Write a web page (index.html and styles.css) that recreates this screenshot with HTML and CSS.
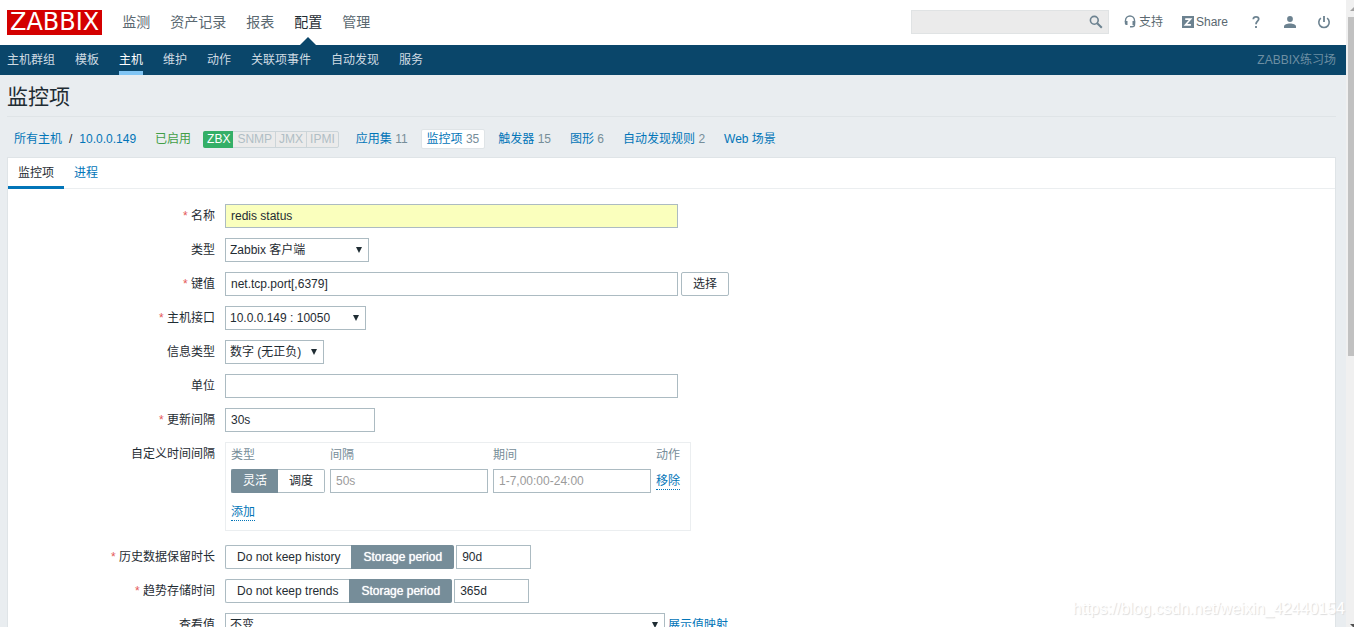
FILE: index.html
```html
<!DOCTYPE html>
<html lang="zh-CN">
<head>
<meta charset="utf-8">
<title>监控项</title>
<link rel="stylesheet" href="styles.css">
</head>
<body>
<div class="page">
  <header class="header">
    <a class="logo" href="#">ZABBIX</a>
    <nav class="main-nav">
      <a href="#">监测</a>
      <a href="#">资产记录</a>
      <a href="#">报表</a>
      <a href="#" class="active">配置</a>
      <a href="#">管理</a>
    </nav>
    <div class="search">
      <input type="search" class="search-input" aria-label="搜索">
      <button class="search-button" aria-label="搜索">
        <svg width="14" height="14" viewBox="0 0 14 14" fill="none" stroke="#6c8290"><circle cx="5.3" cy="5.3" r="3.9" stroke-width="1.6"/><path d="M8.2 8.2l4.6 4.6" stroke-width="2"/></svg>
      </button>
    </div>
    <a class="tool support" href="#">
      <svg width="12" height="13" viewBox="0 0 12 13" fill="#6c8290"><path d="M1.500 7V5.500a4.500 4.500 0 0 1 9 0V10c0 1.200-.8 1.700-2.500 1.700" fill="none" stroke="#6c8290" stroke-width="1.400"/><path d="M.8 6h2.700v4H2.300C1.400 10 .8 9 .8 8zM8.500 6h2.700v2c0 1-.6 2-1.500 2H8.500zM6 11h2v1.500H6z"/></svg>
      <span>支持</span>
    </a>
    <a class="tool share" href="#">
      <svg width="12" height="12" viewBox="0 0 12 12"><path fill="#6c8290" d="M0 0h12v12H0z"/><path d="M3.200 3.200h5.300L3.500 8.800h5.400" fill="none" stroke="#fff" stroke-width="1.700"/></svg>
      <span>Share</span>
    </a>
    <a class="tool icon" href="#" aria-label="帮助">
      <svg width="14" height="14" viewBox="0 0 14 14" fill="none" stroke="#6c8290" stroke-width="1.800"><path d="M4.300 4.200C4.400 2.600 5.400 1.900 7 1.900s2.700.8 2.700 2.200C9.700 6.200 7 6.300 7 9.200"/><path d="M7 10.900v2"/></svg>
    </a>
    <a class="tool icon" href="#" aria-label="用户">
      <svg width="14" height="14" viewBox="0 0 14 14" fill="#6c8290"><circle cx="7" cy="4" r="2.900"/><path d="M1 13v-1.600C1 9.500 4 8.500 7 8.500s6 1 6 2.900V13z"/></svg>
    </a>
    <a class="tool icon" href="#" aria-label="退出">
      <svg width="14" height="14" viewBox="0 0 14 14" fill="none" stroke="#6c8290" stroke-width="1.600"><path d="M3.900 3.200a5.200 5.200 0 1 0 6.200 0"/><path d="M7 1v6" stroke-width="1.800"/></svg>
    </a>
  </header>

  <nav class="sub-nav">
    <a href="#">主机群组</a>
    <a href="#">模板</a>
    <a href="#" class="active">主机</a>
    <a href="#">维护</a>
    <a href="#">动作</a>
    <a href="#">关联项事件</a>
    <a href="#">自动发现</a>
    <a href="#">服务</a>
    <span class="server-name">ZABBIX练习场</span>
  </nav>

  <main class="content">
    <h1 class="title">监控项</h1>

    <div class="object-bar">
      <div class="path"><a href="#">所有主机</a><span>/</span><a href="#">10.0.0.149</a></div>
      <span class="enabled">已启用</span>
      <div class="status"><span class="on">ZBX</span><span>SNMP</span><span>JMX</span><span>IPMI</span></div>
      <div class="objects">
        <div class="object"><a href="#">应用集</a> 11</div>
        <div class="object current"><a href="#">监控项</a> 35</div>
        <div class="object"><a href="#">触发器</a> 15</div>
        <div class="object"><a href="#">图形</a> 6</div>
        <div class="object"><a href="#">自动发现规则</a> 2</div>
        <div class="object"><a href="#">Web 场景</a></div>
      </div>
    </div>

    <section class="panel">
      <div class="tabs">
        <a href="#" class="tab active">监控项</a>
        <a href="#" class="tab">进程</a>
      </div>

      <form class="form">
        <label class="label required" for="name">名称</label>
        <div class="field"><input class="text wide focused" id="name" value="redis status"></div>

        <label class="label" for="type">类型</label>
        <div class="field"><span class="select select-type"><select id="type"><option>Zabbix 客户端</option></select></span></div>

        <label class="label required" for="key">键值</label>
        <div class="field"><input class="text wide" id="key" value="net.tcp.port[,6379]"><button type="button" class="button">选择</button></div>

        <label class="label required" for="iface">主机接口</label>
        <div class="field"><span class="select select-iface"><select id="iface"><option>10.0.0.149 : 10050</option></select></span></div>

        <label class="label" for="info">信息类型</label>
        <div class="field"><span class="select select-info"><select id="info"><option>数字 (无正负)</option></select></span></div>

        <label class="label" for="units">单位</label>
        <div class="field"><input class="text wide" id="units"></div>

        <label class="label required" for="delay">更新间隔</label>
        <div class="field"><input class="text medium" id="delay" value="30s"></div>

        <span class="label">自定义时间间隔</span>
        <div class="field">
          <div class="intervals">
            <table class="interval-table">
              <thead><tr><th>类型</th><th>间隔</th><th>期间</th><th>动作</th></tr></thead>
              <tbody><tr>
                <td>
                  <div class="segment">
                    <input type="radio" name="itype" id="flex" checked><label for="flex">灵活</label>
                    <input type="radio" name="itype" id="sched"><label for="sched">调度</label>
                  </div>
                </td>
                <td><input class="text cell" placeholder="50s" aria-label="间隔"></td>
                <td><input class="text cell" placeholder="1-7,00:00-24:00" aria-label="期间"></td>
                <td><a href="#" class="dotted">移除</a></td>
              </tr></tbody>
            </table>
            <a href="#" class="dotted">添加</a>
          </div>
        </div>

        <label class="label required" for="history">历史数据保留时长</label>
        <div class="field tight">
          <div class="segment">
            <input type="radio" name="hist" id="h0"><label for="h0">Do not keep history</label>
            <input type="radio" name="hist" id="h1" checked><label for="h1">Storage period</label>
          </div>
          <input class="text small" id="history" value="90d">
        </div>

        <label class="label required" for="trends">趋势存储时间</label>
        <div class="field tight">
          <div class="segment">
            <input type="radio" name="trend" id="t0"><label for="t0">Do not keep trends</label>
            <input type="radio" name="trend" id="t1" checked><label for="t1">Storage period</label>
          </div>
          <input class="text small" id="trends" value="365d">
        </div>

        <label class="label" for="valuemap">查看值</label>
        <div class="field"><span class="select select-map"><select id="valuemap"><option>不变</option></select></span><a href="#" class="dotted">展示值映射</a></div>
      </form>
    </section>
  </main>
</div>
<div class="scrollbar" aria-hidden="true">
  <svg width="8" height="17" viewBox="0 0 8 17"><path d="M4 11l4-4v4z" fill="#a3a3a3"/></svg>
  <div class="thumb"></div>
  <svg class="down" width="8" height="17" viewBox="0 0 8 17"><path d="M4 14h4v4z" fill="#505050"/></svg>
</div>
<div class="watermark">https://blog.csdn.net/weixin_42440154</div>
</body>
</html>
```

FILE: styles.css
```css
* { box-sizing: border-box; }

body {
  margin: 0;
  height: 100vh;
  overflow: hidden;
  display: flex;
  background: #e9edf0;
  color: #1f2c33;
  font: 12px/18px "Liberation Sans", "Noto Sans CJK SC", sans-serif;
}

a { color: #0275b8; text-decoration: none; }
input, select, button { font: inherit; color: inherit; }

.page { flex: 1; min-width: 0; }

.header {
  display: flex;
  align-items: center;
  height: 45px;
  padding: 0 15px 0 7px;
  background: #fff;
}
.logo {
  padding: 0 3px;
  background: #d40000;
  color: #fff;
  font: 24px/25px "DejaVu Sans", sans-serif;
}
.main-nav {
  display: flex;
  align-self: stretch;
  gap: 20px;
  margin: 0 auto 0 20px;
}
.main-nav a {
  position: relative;
  color: #5a6870;
  font-size: 14px;
  line-height: 44px;
}
.main-nav .active { color: #1f2c33; }
.main-nav .active::after {
  content: "";
  position: absolute;
  bottom: 0;
  left: 50%;
  margin-left: -8px;
  border: solid transparent;
  border-width: 0 8px 8px;
  border-bottom-color: #0a466a;
}

.search {
  display: flex;
  align-items: center;
  width: 198px;
  height: 24px;
  margin: 0 15px 1px 0;
  background: #ebebeb;
  border: 1px solid #e0e3e4;
}
.search-input { flex: 1; min-width: 0; border: 0; background: none; outline: none; }
.search-button { display: flex; padding: 0 5px; border: 0; background: none; }

.tool {
  display: flex;
  align-items: center;
  margin-bottom: 2px;
  color: #5a6870;
}
.support { gap: 3px; margin-right: 19px; }
.share { gap: 2px; margin-right: 21px; }
.tool.icon + .icon { margin-left: 20px; }

.sub-nav {
  display: flex;
  gap: 20px;
  height: 30px;
  padding: 0 10px 0 7px;
  background: #0a466a;
  line-height: 30px;
}
.sub-nav a { color: #cfdbe3; }
.sub-nav .active { color: #fff; border-bottom: 4px solid #81c5f4; }
.server-name { margin-left: auto; color: #6d8fa3; }

.content { padding: 0 10px 0 7px; }
.title {
  margin: 0;
  padding: 7px 0 4px;
  border-bottom: 1px solid #dfe4e7;
  font-size: 21px;
  font-weight: normal;
  line-height: 30px;
}

.object-bar {
  display: flex;
  align-items: center;
  height: 40px;
  padding: 4px 7px 0;
}
.path { display: flex; gap: 7px; margin-right: 19px; }
.enabled { margin-right: 12px; color: #429e47; }
.status {
  display: flex;
  margin-right: 11px;
  border: 1px solid #ccd5d9;
  border-radius: 2px;
  background: #ebebeb;
  color: #b0bec5;
  line-height: 15px;
}
.status span { padding: 0 3px; }
.status span + span { padding-left: 4px; }
.status span + span + span { padding-left: 3px; border-left: 1px solid #ccd5d9; }
.status .on {
  margin: -1px 0 -1px -1px;
  padding: 1px 3px 1px 4px;
  border-radius: 2px 0 0 2px;
  background: #34af67;
  color: #fff;
}
.objects { display: flex; gap: 7px; }
.object {
  padding: 0 5px;
  border: 1px solid transparent;
  border-radius: 2px;
  color: #768d99;
}
.object.current { background: #fff; border-color: #dfe4e7; }

.panel { background: #fff; border: 1px solid #dfe4e7; }
.tabs { display: flex; border-bottom: 1px solid #ebeef0; }
.tab { padding: 0 10px; line-height: 30px; }
.tab.active {
  margin-bottom: -1px;
  border-bottom: 3px solid #0275b8;
  color: #1f2c33;
  height: 31px;
}

.form {
  display: grid;
  grid-template-columns: 207px 1fr;
  gap: 10px;
  padding: 15px 0 10px;
}
.label { text-align: right; line-height: 24px; }
.required::before { content: "* "; color: #e45959; }
.field { display: flex; align-items: center; gap: 3px; }
.tight { gap: 2px; }

.text {
  height: 24px;
  padding: 0 5px;
  border: 1px solid #acbbc2;
  background: #fff;
  outline: none;
}
.text::placeholder { color: #9b9b9b; opacity: 1; }
.wide { width: 453px; }
.medium { width: 150px; }
.small { width: 75px; }
.cell { display: block; width: 158px; }
.focused { background: #faffbd; }

.select { position: relative; display: flex; }
.select select {
  width: 100%;
  height: 24px;
  padding: 0 4px;
  border: 1px solid #acbbc2;
  border-radius: 0;
  background: #fff;
  appearance: none;
}
.select::after {
  content: "";
  position: absolute;
  top: 9px;
  right: 7px;
  border: solid transparent;
  border-width: 6px 3px 0;
  border-top-color: #1f2c33;
  pointer-events: none;
}
.select-type { width: 144px; }
.select-iface { width: 141px; }
.select-info { width: 99px; }
.select-map { width: 440px; }

.button {
  height: 24px;
  padding: 0 11px;
  border: 1px solid #acbbc2;
  border-radius: 2px;
  background: #fff;
}

.segment { display: flex; }
.segment input { position: absolute; opacity: 0; pointer-events: none; }
.segment label {
  padding: 0 11px;
  border: 1px solid #acbbc2;
  border-radius: 2px;
  line-height: 22px;
}
.segment label:first-of-type { border-right: 0; border-radius: 2px 0 0 2px; }
.segment label:last-of-type { border-left: 0; border-radius: 0 2px 2px 0; }
.segment input:checked + label {
  border-color: #768d99;
  background: #768d99;
  color: #fff;
}
.tight .segment input:checked + label {
  padding: 0 11px 0 12px;
  text-shadow: 0 0 1px #fff;
}

.intervals {
  width: 466px;
  margin-bottom: 4px;
  padding: 3px 5px 9px;
  border: 1px solid #ebeef0;
}
.interval-table { margin-bottom: 10px; border-collapse: collapse; }
.interval-table th {
  padding: 0 5px 5px 0;
  color: #768d99;
  font-weight: normal;
  text-align: left;
}
.interval-table td { padding: 0 5px 0 0; }
.dotted { display: inline-block; border-bottom: 1px dotted #0275b8; line-height: 16px; }

.scrollbar {
  display: flex;
  flex-direction: column;
  width: 8px;
  background: #f0f0f0;
}
.thumb { height: 54%; margin-left: 2px; background: #c1c1c1; }
.down { margin-top: auto; }

.watermark {
  position: absolute;
  right: 9px;
  bottom: 9px;
  color: #fff;
  font-size: 16px;
  text-shadow: 1px 1px 1px #dcdcdc;
}
```
